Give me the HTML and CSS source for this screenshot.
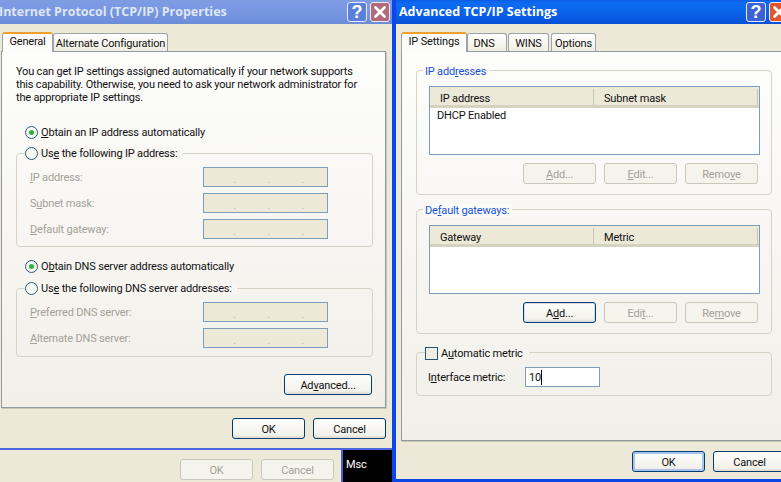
FILE: index.html
```html
<!DOCTYPE html>
<html lang="en">
<head>
<meta charset="utf-8">
<title>TCP/IP Properties</title>
<link rel="stylesheet" href="styles.css">
</head>
<body>
<div class="desktop">
  <section class="win back">
    <div class="back-actions">
      <button class="btn off">OK</button>
      <button class="btn off">Cancel</button>
    </div>
  </section>
  <div class="msc">Msc</div>

  <section class="win props">
    <header class="title faded">
      <h1>Internet Protocol (TCP/IP) Properties</h1>
      <span class="tb help"><svg viewBox="0 0 20 20"><text x="10" y="17" text-anchor="middle">?</text></svg></span>
      <span class="tb close"><svg viewBox="0 0 20 20"><path d="M5 5 15 15M15 5 5 15"/></svg></span>
    </header>
    <div class="client">
      <nav class="tabs">
        <span class="tab active w-general">General</span>
        <span class="tab w-alt">Alternate Configuration</span>
      </nav>
      <div class="panel panel-left">
        <p class="intro">You can get IP settings assigned automatically if your network supports<br>this capability. Otherwise, you need to ask your network administrator for<br>the appropriate IP settings.</p>
        <div class="radio-row first"><span class="radio on"></span><span><u>O</u>btain an IP address automatically</span></div>
        <div class="group radio-group ip-group">
          <div class="legend radio-legend"><span class="radio"></span><span>Us<u>e</u> the following IP address:</span></div>
          <div class="field-row"><span class="dim"><u>I</u>P address:</span><span class="ipfield"><i>.</i><i>.</i><i>.</i></span></div>
          <div class="field-row"><span class="dim">S<u>u</u>bnet mask:</span><span class="ipfield"><i>.</i><i>.</i><i>.</i></span></div>
          <div class="field-row"><span class="dim"><u>D</u>efault gateway:</span><span class="ipfield"><i>.</i><i>.</i><i>.</i></span></div>
        </div>
        <div class="radio-row second"><span class="radio on"></span><span>O<u>b</u>tain DNS server address automatically</span></div>
        <div class="group radio-group dns-group">
          <div class="legend radio-legend"><span class="radio"></span><span>Us<u>e</u> the following DNS server addresses:</span></div>
          <div class="field-row"><span class="dim"><u>P</u>referred DNS server:</span><span class="ipfield"><i>.</i><i>.</i><i>.</i></span></div>
          <div class="field-row"><span class="dim"><u>A</u>lternate DNS server:</span><span class="ipfield"><i>.</i><i>.</i><i>.</i></span></div>
        </div>
        <div class="adv-row"><button class="btn adv">Ad<u>v</u>anced...</button></div>
      </div>
      <div class="actions">
        <button class="btn">OK</button>
        <button class="btn">Cancel</button>
      </div>
    </div>
  </section>

  <section class="win advanced">
    <header class="title">
      <h1>Advanced TCP/IP Settings</h1>
      <span class="tb help"><svg viewBox="0 0 20 20"><text x="10" y="17" text-anchor="middle">?</text></svg></span>
      <span class="tb close"><svg viewBox="0 0 20 20"><path d="M5 5 15 15M15 5 5 15"/></svg></span>
    </header>
    <div class="client">
      <nav class="tabs">
        <span class="tab active w-ip">IP Settings</span>
        <span class="tab w-dns">DNS</span>
        <span class="tab w-wins">WINS</span>
        <span class="tab w-opt">Options</span>
      </nav>
      <div class="panel panel-right">
        <div class="group adv-group">
          <div class="legend blue"><span>IP add<u>r</u>esses</span></div>
          <div class="list">
            <div class="list-head"><span class="col-a">IP address</span><span class="col-b">Subnet mask</span></div>
            <div class="list-item">DHCP Enabled</div>
          </div>
          <div class="list-actions">
            <button class="btn off"><u>A</u>dd...</button>
            <button class="btn off"><u>E</u>dit...</button>
            <button class="btn off">Remo<u>v</u>e</button>
          </div>
        </div>
        <div class="group adv-group">
          <div class="legend blue"><span>De<u>f</u>ault gateways:</span></div>
          <div class="list">
            <div class="list-head"><span class="col-a">Gateway</span><span class="col-b">Metric</span></div>
          </div>
          <div class="list-actions">
            <button class="btn default">A<u>d</u>d...</button>
            <button class="btn off">Edi<u>t</u>...</button>
            <button class="btn off">Re<u>m</u>ove</button>
          </div>
        </div>
        <div class="group metric-group">
          <div class="legend check-legend"><span class="check"></span><span>A<u>u</u>tomatic metric</span></div>
          <div class="metric-row"><span>I<u>n</u>terface metric:</span><span class="input">10<b class="caret"></b></span></div>
        </div>
      </div>
      <div class="actions">
        <button class="btn focus">OK</button>
        <button class="btn">Cancel</button>
      </div>
    </div>
    <span class="stray"></span>
  </section>
</div>
</body>
</html>
```
FILE: styles.css
```css
* { box-sizing: border-box; }
html, body { margin: 0; padding: 0; }
body { width: 781px; height: 482px; overflow: hidden; background: #000; font: 11px/13px Roboto, "Liberation Sans", Arial, sans-serif; letter-spacing: -0.18px; color: #111; }
.desktop { position: relative; width: 781px; height: 482px; overflow: hidden; }

.win { position: absolute; background: #ece9d8; }
.props { left: 0; top: 0; width: 395px; height: 450px; border-right: 3px solid #3f62dc; border-bottom: 2px solid #4a68dc; }
.advanced { left: 392px; top: 0; width: 400px; height: 482px; border-left: 4px solid #0c46e6; border-bottom: 3px solid #0c46e6; }
.back { left: 0; top: 448px; width: 343px; height: 34px; border-right: 2px solid #4a62c8; }
.back-actions { display: flex; gap: 8px; padding: 11px 0 0 180px; }
.msc { position: absolute; left: 346px; top: 458px; color: #fff; }

.title { display: flex; align-items: center; height: 24px; background: linear-gradient(#0a5ee6, #0e6cf2 15%, #0a60e8 60%, #0650d6); color: #fff; }
.title.faded { background: linear-gradient(#7e9ce0, #7c9ae4 25%, #7393e0 70%, #6c8cd8); color: #dfe6f2; }
.title h1 { margin: 0; flex: 1; font: bold 12.5px/24px "Open Sans", sans-serif; letter-spacing: 0; white-space: nowrap; }
.props h1 { margin-left: -1px; }
.advanced h1 { margin-left: 3px; }
.tb { display: block; width: 20px; height: 20px; margin-right: 3px; border: 1px solid #e8ecf8; border-radius: 3px; }
.tb svg { display: block; width: 18px; height: 18px; }
.help { background: #3c62d8; }
.help text { font: bold 20px "Liberation Sans", sans-serif; fill: #fff; }
.close path { stroke: #fff; stroke-width: 3; stroke-linecap: round; fill: none; }
.props .help { background: #5d7fdc; }
.props .close { background: #b46a78; }
.props .tb { margin-right: 3px; }
.props .tb:last-child { margin-right: 2px; }
.advanced .close { background: #e2562c; flex: none; }
.advanced .tb { flex: none; }
.advanced .title { padding-right: 0; }

.client { display: flex; flex-direction: column; }
.tabs { display: flex; align-items: flex-end; height: 27px; position: relative; z-index: 1; }
.tab { height: 18px; padding-top: 3px; text-align: center; white-space: nowrap; background: linear-gradient(#fff, #f0eee2); border: 1px solid #9aa5a8; border-bottom: 0; border-radius: 3px 3px 0 0; }
.tab.active { height: 20px; margin-bottom: -1px; padding-top: 1px; background: #fcfcfa; border-top: 2px solid #f0a030; }
.props .tabs { padding-left: 2px; }
.advanced .tabs { padding-left: 5px; }
.w-general { width: 51px; }
.w-alt { width: 115px; }
.w-ip { width: 66px; }
.w-dns { width: 40px; padding-right: 6px; }
.w-wins { width: 41px; margin-left: 1px; }
.w-opt { width: 45px; margin-left: 2px; }

.panel { background: linear-gradient(#fdfdfc, #f1efe8); border: 1px solid #929ca0; box-shadow: 1px 1px 0 #c8c5b4; }
.panel-left { width: 385px; height: 357px; margin-left: 1px; padding: 13px 13px 0 14px; }
.panel-right { width: 396px; height: 390px; margin-left: 5px; padding: 18px 0 0 14px; }
.intro { margin: 0; white-space: nowrap; }

.radio-row { display: flex; align-items: center; gap: 3px; height: 14px; margin-left: 9px; }
.radio-row.first { margin-top: 21px; }
.radio-row.second { margin-top: 12px; }
.radio { display: block; flex: none; width: 13px; height: 13px; border: 1px solid #2f5a78; border-radius: 50%; background: #f8f8f4; position: relative; }
.radio.on::after { content: ""; position: absolute; left: 3px; top: 3px; width: 5px; height: 5px; border-radius: 50%; background: #35b040; }

.group { position: relative; border: 1px solid #d6d3c6; border-radius: 4px; }
.legend { position: absolute; display: flex; align-items: center; gap: 3px; background: #f8f7f3; padding: 0 3px; white-space: nowrap; }
.radio-legend { left: 8px; top: -7px; background: #f7f6f1; padding: 0 5px 0 0; }
.radio-group { width: 357px; padding-top: 13px; }
.ip-group { height: 94px; margin-top: 14px; }
.dns-group { height: 69px; margin-top: 15px; }

.field-row { display: flex; align-items: center; justify-content: space-between; height: 20px; margin: 0 44px 6px 13px; }
.dim { color: #a3a298; }
.ipfield { display: flex; justify-content: space-between; width: 125px; height: 20px; padding: 5px 23px 0 29px; background: #ece9d8; border: 1px solid #7f9db9; color: #bbb; }
.ipfield i { font-style: normal; }

.btn { display: block; width: 73px; height: 21px; padding: 1px 0 0; font: inherit; letter-spacing: inherit; color: #111; text-align: center; background: linear-gradient(#fefefe, #f2f1ea 85%, #dcd8c8); border: 1px solid #003c74; border-radius: 3px; }
.btn.off { background: #f4f3ec; color: #a3a298; border-color: #c9c7ba; }
.btn.default { box-shadow: inset 0 0 0 1px #cfdcec; }
.btn.focus { box-shadow: inset 0 0 0 2px #a8c4ec; }
.adv-row { display: flex; justify-content: flex-end; margin: 17px 0 0; }
.adv { width: 88px; }
.actions { display: flex; gap: 8px; padding-top: 10px; }
.props .actions { padding-left: 232px; }
.advanced .actions { padding-left: 236px; }

.adv-group { width: 356px; height: 125px; margin-bottom: 14px; padding: 15px 0 0 12px; }
.legend.blue { left: 6px; top: -6px; color: #1650d8; background: #fbfbf8; padding-left: 2px; }
.list { width: 331px; height: 69px; background: #fff; border: 1px solid #7f9db9; }
.list-head { display: flex; height: 21px; padding: 0 1px; background: #ece9d8; border-bottom: 3px solid #d6d2c0; }
.col-a { width: 163px; padding-left: 9px; padding-top: 3px; border-right: 1px solid #c8c5b4; margin: 2px 0 0; }
.col-b { flex: 1; padding-left: 10px; padding-top: 3px; border-right: 1px solid #c8c5b4; margin: 2px 0 0; }
.list-item { padding: 1px 0 0 7px; }
.list-actions { display: flex; gap: 8px; margin: 8px 0 0 94px; }
.metric-group { width: 356px; height: 44px; margin-top: 18px; padding: 14px 0 0 12px; }
.check-legend { left: 8px; top: -6px; background: #f5f4ef; gap: 3px; padding: 0 6px 0 0; }
.check { display: block; width: 13px; height: 13px; background: #eeece4; border: 1px solid #2c5470; }
.metric-row { display: flex; align-items: center; margin-left: -1px; }
.metric-row > span:first-child { width: 97px; }
.input { display: flex; align-items: center; width: 75px; height: 20px; padding-left: 3px; background: #fff; border: 1px solid #7f9db9; }
.caret { display: block; width: 1px; height: 15px; background: #000; }
.stray { position: absolute; left: 387px; top: 270px; width: 2px; height: 7px; background: #2030d0; }
```
